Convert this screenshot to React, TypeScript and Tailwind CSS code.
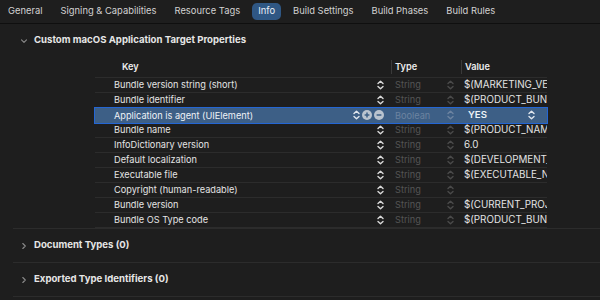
import React from 'react';

const tabs = ['General', 'Signing & Capabilities', 'Resource Tags', 'Info', 'Build Settings', 'Build Phases', 'Build Rules'];

const rows = [
  { key: 'Bundle version string (short)', type: 'String', value: '$(MARKETING_VERSION)' },
  { key: 'Bundle identifier', type: 'String', value: '$(PRODUCT_BUNDLE_IDENTIFIER)' },
  { key: 'Application is agent (UIElement)', type: 'Boolean', value: 'YES', selected: true },
  { key: 'Bundle name', type: 'String', value: '$(PRODUCT_NAME)' },
  { key: 'InfoDictionary version', type: 'String', value: '6.0' },
  { key: 'Default localization', type: 'String', value: '$(DEVELOPMENT_LANGUAGE)' },
  { key: 'Executable file', type: 'String', value: '$(EXECUTABLE_NAME)' },
  { key: 'Copyright (human-readable)', type: 'String', value: '' },
  { key: 'Bundle version', type: 'String', value: '$(CURRENT_PROJECT_VERSION)' },
  { key: 'Bundle OS Type code', type: 'String', value: '$(PRODUCT_BUNDLE_PACKAGE_TYPE)' }
];

const Stepper = ({ color = '#d8d8d8' }: { color?: string }) => (
  <svg width="7" height="10" viewBox="0 0 7 10" fill="none">
    <path d="M1 3.6 L3.5 1.2 L6 3.6" stroke={color} strokeWidth="1.4" strokeLinecap="round" strokeLinejoin="round" />
    <path d="M1 6.4 L3.5 8.8 L6 6.4" stroke={color} strokeWidth="1.4" strokeLinecap="round" strokeLinejoin="round" />
  </svg>
);

const CircleBtn = ({ plus }: { plus?: boolean }) => (
  <svg width="10" height="10" viewBox="0 0 10 10">
    <circle cx="5" cy="5" r="5" fill="#b9c3cf" />
    <path d="M2.6 5 H7.4" stroke="#3d5f86" strokeWidth="1.5" />
    {plus && <path d="M5 2.6 V7.4" stroke="#3d5f86" strokeWidth="1.5" />}
  </svg>
);

const Chevron = ({ open }: { open?: boolean }) => (
  <svg width="8" height="8" viewBox="0 0 8 8" fill="none">
    {open ? (
      <path d="M1.5 2.8 L4 5.3 L6.5 2.8" stroke="#8a8a8a" strokeWidth="1.1" strokeLinecap="round" strokeLinejoin="round" />
    ) : (
      <path d="M2.8 1.5 L5.3 4 L2.8 6.5" stroke="#8a8a8a" strokeWidth="1.1" strokeLinecap="round" strokeLinejoin="round" />
    )}
  </svg>
);

export default function App() {
  return (
    <div
      className="w-[600px] h-[300px] overflow-hidden bg-[#1e1e1e] text-[#e4e4e4] text-[9.2px]"
      style={{ fontFamily: 'Inter, "Noto Sans", sans-serif' }}
    >
      {/* tab bar */}
      <div className="h-[24px] flex items-center pl-[2px] gap-[6px] border-b border-[#0f0f0f] text-[9.4px]">
        {tabs.map((t) => (
          <span
            key={t}
            className={
              t === 'Info'
                ? 'px-[6px] h-[17px] flex items-center rounded-[5px] bg-[#2f5784] text-[#e8eef6]'
                : 'px-[6px] h-[17px] flex items-center text-[#d2d2d2]'
            }
          >
            {t}
          </span>
        ))}
      </div>

      {/* custom properties */}
      <div className="flex items-center h-[33px] pl-[20px] gap-[6px] font-bold text-[#e6e6e6] text-[9.6px]">
        <Chevron open />
        <span>Custom macOS Application Target Properties</span>
      </div>

      <div className="ml-[95px] w-[452px]">
        <div className="flex h-[21px] items-center font-semibold text-[#ececec] border-b border-[#2c2c2c]">
          <div className="w-[296px] pl-[27px]">Key</div>
          <div className="w-[70px] h-[14px] flex items-center border-l border-[#3a3a3a] pl-[3px]">Type</div>
          <div className="flex-1 h-[14px] flex items-center border-l border-[#3a3a3a] pl-[3px]">Value</div>
        </div>
        {rows.map((r) =>
          r.selected ? (
            <div key={r.key} className="flex h-[15px] items-center bg-[#3d5f86] outline outline-1 outline-[#2466d4] text-[#eef2f7]">
              <div className="w-[296px] pl-[19px] flex items-center">
                <span className="flex-1 whitespace-nowrap">{r.key}</span>
                <span className="flex items-center gap-[2px] pr-[7px]">
                  <Stepper color="#e0e6ee" />
                  <CircleBtn plus />
                  <CircleBtn />
                </span>
              </div>
              <div className="w-[70px] flex items-center pl-[4px] pr-[7px] text-[#6c83a0]">
                <span className="flex-1">{r.type}</span>
                <Stepper color="#6c83a0" />
              </div>
              <div className="flex-1 flex items-center pl-[7px] pr-[12px] font-semibold text-[9.6px]">
                <span className="flex-1">{r.value}</span>
                <Stepper color="#e0e6ee" />
              </div>
            </div>
          ) : (
            <div key={r.key} className="flex h-[15px] items-center border-b border-[#2c2c2c]">
              <div className="w-[296px] pl-[19px] pr-[7px] flex items-center">
                <span className="flex-1 whitespace-nowrap">{r.key}</span>
                <Stepper />
              </div>
              <div className="w-[70px] flex items-center pl-[4px] pr-[7px] text-[#555555]">
                <span className="flex-1">{r.type}</span>
                <Stepper color="#4a4a4a" />
              </div>
              <div className="flex-1 overflow-hidden whitespace-nowrap pl-[3px] text-[9.8px]">{r.value}</div>
            </div>
          )
        )}
      </div>

      <div className="ml-[13px] border-t border-[#2c2c2c] text-[9.6px]">
        <div className="flex items-center h-[34px] pl-[7px] gap-[6px] font-bold text-[#e6e6e6] border-b border-[#2c2c2c]">
          <Chevron />
          <span>Document Types (0)</span>
        </div>
        <div className="flex items-center h-[34px] pl-[7px] gap-[6px] font-bold text-[#e6e6e6] border-b border-[#2c2c2c]">
          <Chevron />
          <span>Exported Type Identifiers (0)</span>
        </div>
      </div>
    </div>
  );
}
